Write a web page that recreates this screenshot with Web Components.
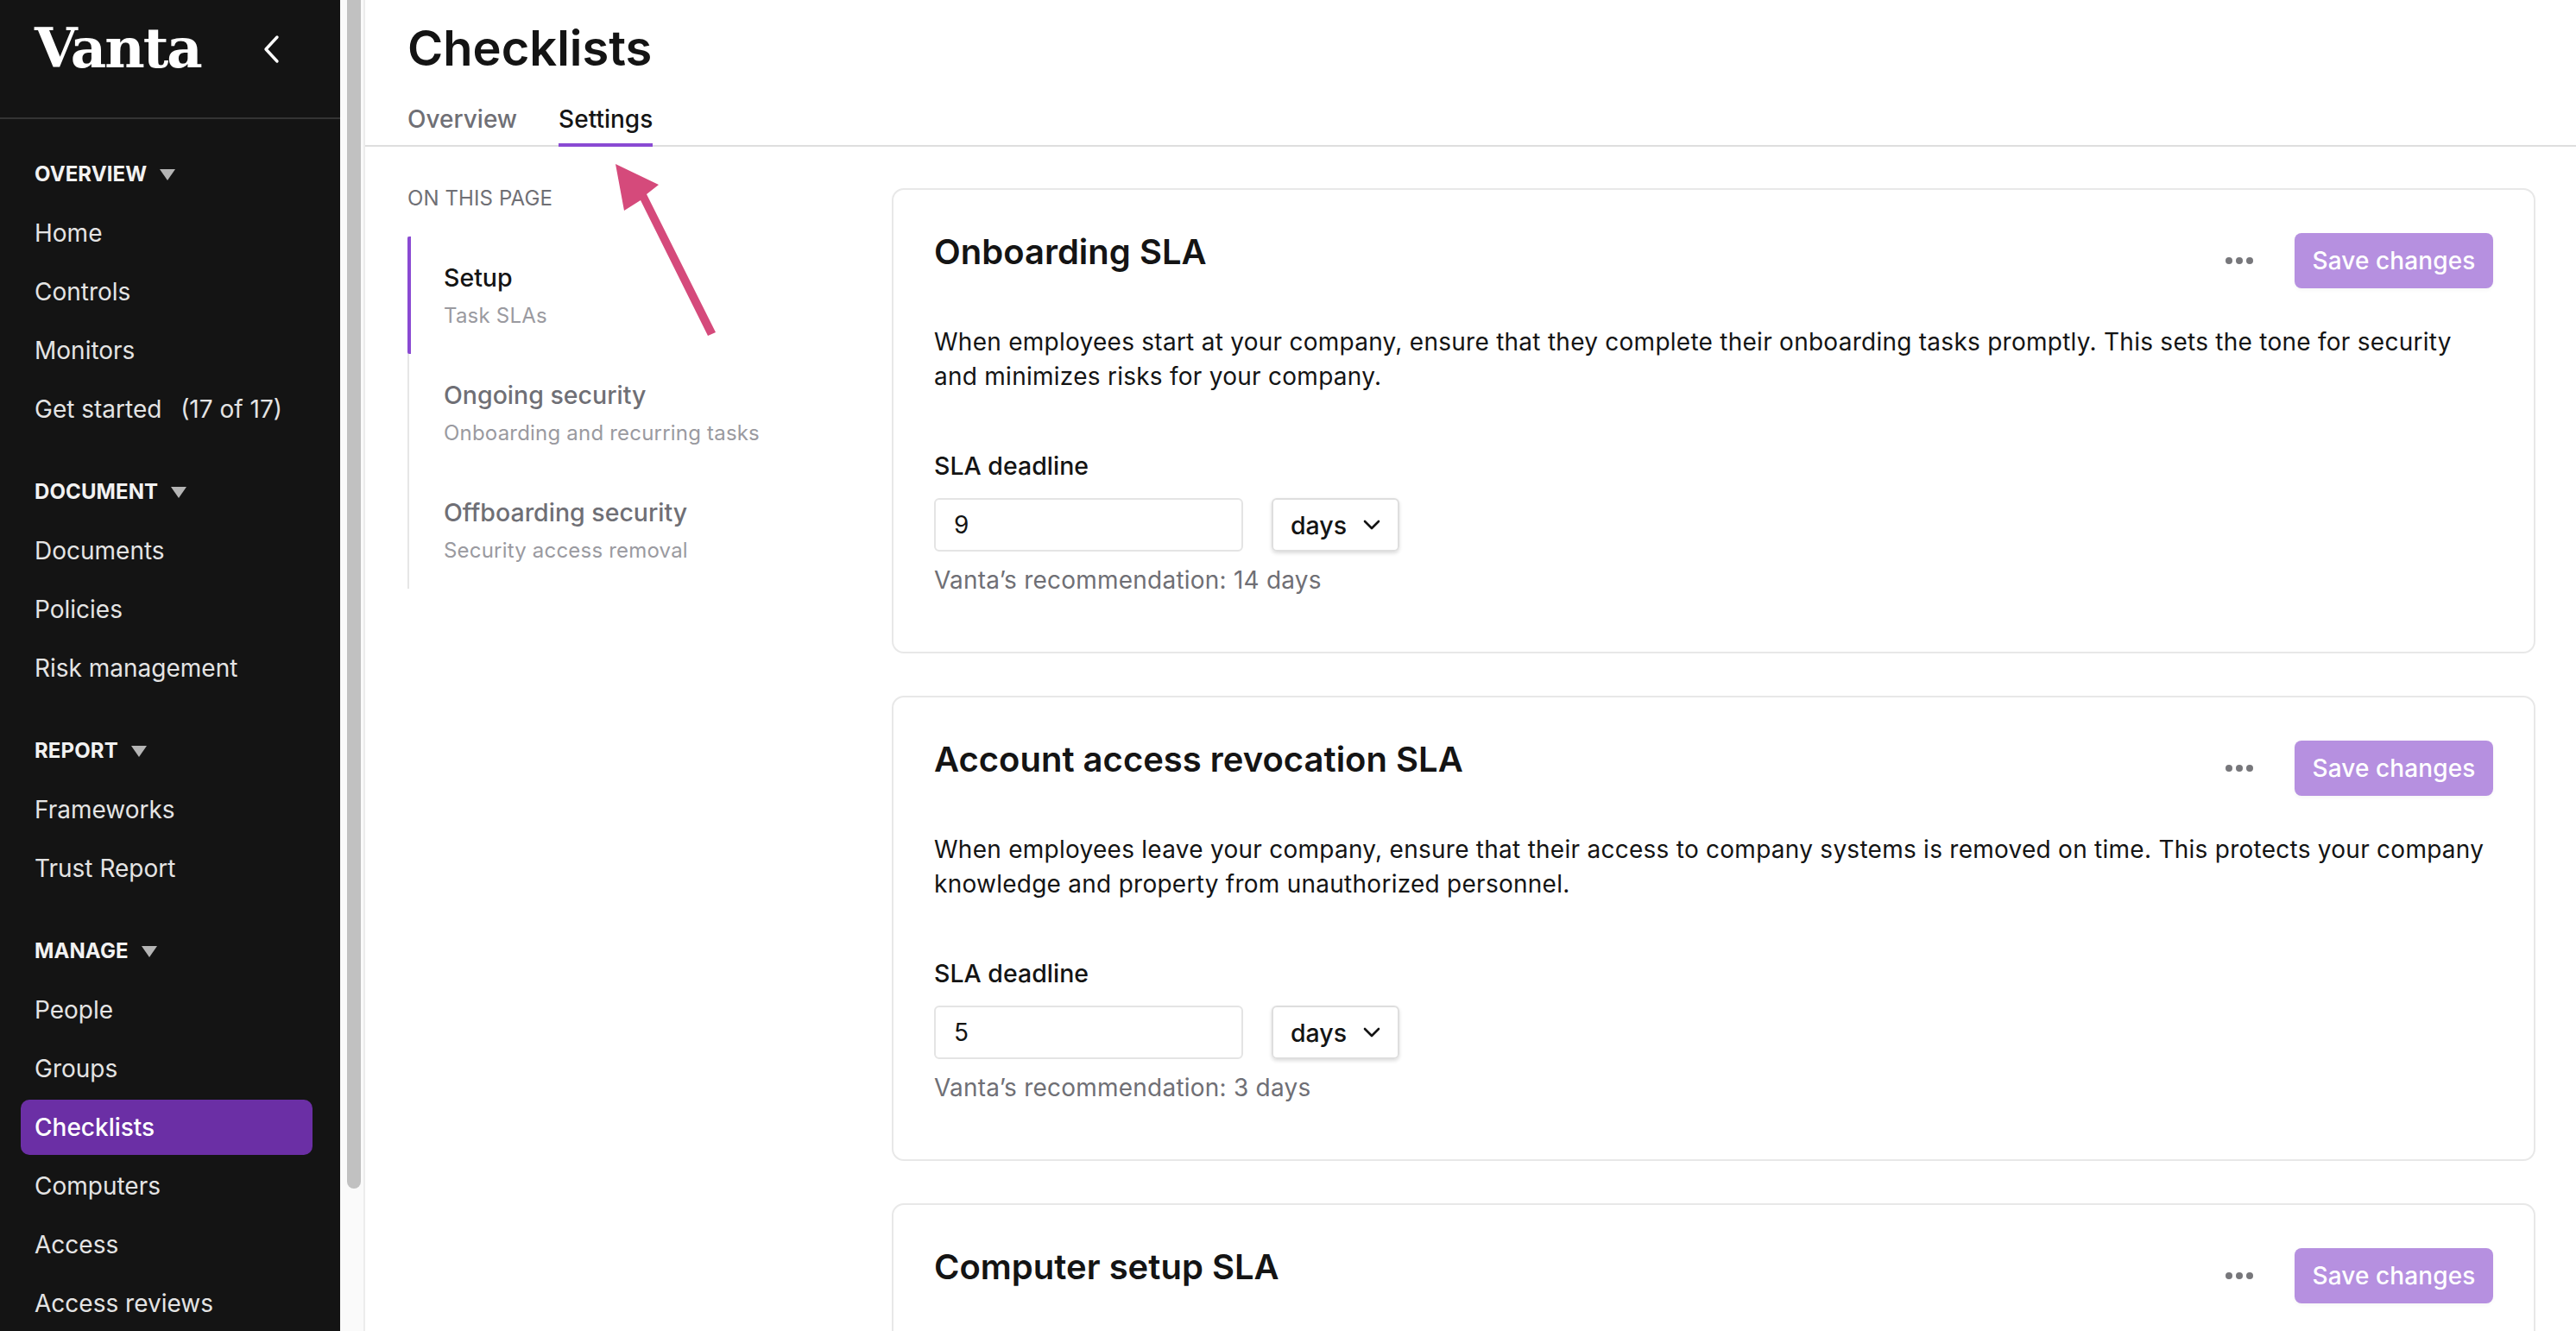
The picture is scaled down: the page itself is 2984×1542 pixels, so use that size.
<!DOCTYPE html>
<html lang="en"><head><meta charset="utf-8"><title>Checklists</title>
<style>
html,body{margin:0;height:100%;overflow:hidden;background:#fff;font-family:Inter,"Noto Sans",sans-serif;color:#141414}
v-app{height:100vh}
.wide{padding-left:6px}
</style></head><body>
<v-app>
  <v-sidebar slot="side">
    <v-nav-section label="OVERVIEW"><v-nav-item>Home</v-nav-item><v-nav-item>Controls</v-nav-item><v-nav-item>Monitors</v-nav-item><v-nav-item>Get started&nbsp; <span class="wide">(17 of 17)</span></v-nav-item></v-nav-section>
    <v-nav-section label="DOCUMENT"><v-nav-item>Documents</v-nav-item><v-nav-item>Policies</v-nav-item><v-nav-item>Risk management</v-nav-item></v-nav-section>
    <v-nav-section label="REPORT"><v-nav-item>Frameworks</v-nav-item><v-nav-item>Trust Report</v-nav-item></v-nav-section>
    <v-nav-section label="MANAGE"><v-nav-item>People</v-nav-item><v-nav-item>Groups</v-nav-item><v-nav-item active>Checklists</v-nav-item><v-nav-item>Computers</v-nav-item><v-nav-item>Access</v-nav-item><v-nav-item>Access reviews</v-nav-item></v-nav-section>
  </v-sidebar>
  <v-rail slot="rail"></v-rail>
  <v-main slot="main">
    <v-toc slot="toc">
      <v-toc-item active label="Setup">Task SLAs</v-toc-item>
      <v-toc-item label="Ongoing security">Onboarding and recurring tasks</v-toc-item>
      <v-toc-item label="Offboarding security">Security access removal</v-toc-item>
    </v-toc>
    <sla-card heading="Onboarding SLA" value="9" rec="Vanta’s recommendation: 14 days">When employees start at your company, ensure that they complete their onboarding tasks promptly. This sets the tone for security and minimizes risks for your company.</sla-card>
    <sla-card heading="Account access revocation SLA" value="5" rec="Vanta’s recommendation: 3 days">When employees leave your company, ensure that their access to company systems is removed on time. This protects your company knowledge and property from unauthorized personnel.</sla-card>
    <sla-card heading="Computer setup SLA"></sla-card>
  </v-main>
</v-app>
<script>
function def(name,html){
  customElements.define(name,class extends HTMLElement{
    connectedCallback(){
      if(this.shadowRoot)return;
      const r=this.attachShadow({mode:'open'});
      const a=n=>this.getAttribute(n)||'';
      r.innerHTML=typeof html==='function'?html(a,this):html;
    }
  });
}
def('v-app',`<style>:host{display:flex;width:100%;overflow:hidden}</style><slot name="side"></slot><slot name="rail"></slot><slot name="main"></slot>`);
def('v-sidebar',`<style>
:host{display:block;flex:none;width:394px;height:100%;background:#141414;color:#e4e4e4;overflow:hidden}
.top{height:136px;border-bottom:2px solid #343434;display:flex;align-items:flex-start;padding-left:40px}
.logo{font:700 64px/1 "DejaVu Serif",serif;color:#fff;letter-spacing:-2px;margin-top:24px;width:265px}
svg{margin-top:40px}
nav{padding:29px 24px 0}
</style><div class="top"><div class="logo">Vanta</div><svg width="20" height="34" viewBox="0 0 20 34" fill="none" stroke="#fff" stroke-width="3.4" stroke-linecap="round" stroke-linejoin="round"><path d="M16 3 3 17l13 14"/></svg></div><nav><slot></slot></nav>`);
def('v-nav-section',a=>`<style>
:host{display:block;margin-bottom:29px}
.h{height:68px;margin-bottom:3px;display:flex;align-items:center;padding-left:16px;font-weight:700;font-size:24px;color:#f2f2f2;gap:15px;letter-spacing:.1px}
svg{display:block;margin-top:1px}
</style><div class="h"><span>${a('label')}</span><svg width="18" height="14" viewBox="0 0 18 14"><path d="M0 1h18L9 14z" fill="#b5b5b5"/></svg></div><slot></slot>`);
def('v-nav-item',(a,el)=>`<style>
:host{display:flex;align-items:center;height:64px;margin-bottom:4px;padding-left:16px;border-radius:10px;font-size:28px;white-space:pre;width:322px;${el.hasAttribute('active')?'background:#6b2fa5;color:#fff;font-weight:500;':''}}
</style><slot></slot>`);
def('v-rail',`<style>
:host{display:block;flex:none;width:29px;height:100%;box-sizing:border-box;background:#fafafa;border-right:2px solid #ececec;padding-left:8px}
div{width:16px;height:1377px;background:#c1c1c1;border-radius:0 0 8px 8px}
</style><div></div>`);
def('v-main',`<style>
:host{display:block;flex:1;min-width:0;position:relative;height:100%;overflow:hidden}
header{padding:0 0 0 49px;border-bottom:2px solid #dedede;height:168px}
h1{margin:0;font-size:56px;line-height:56px;padding-top:28px;font-weight:600;color:#141414}
.tabs{display:flex;gap:48px;margin-top:34px;font-size:28px;line-height:40px;font-weight:500;color:#6f6f75}
.tabs span{height:52px;box-sizing:border-box}
.tabs .on{color:#141414;border-bottom:4px solid #8a4ad3}
.body{display:flex;padding:48px 47px 0 49px}
.toc{flex:none;width:561px}
.cards{flex:1;min-width:0;display:flex;flex-direction:column;gap:49px}
.arrow{position:absolute;left:0;top:0;pointer-events:none}
</style><header><h1>Checklists</h1><div class="tabs"><span>Overview</span><span class="on">Settings</span></div></header>
<div class="body"><div class="toc"><slot name="toc"></slot></div><div class="cards"><slot></slot></div></div>
<svg class="arrow" width="500" height="400" viewBox="423 0 500 400"><path d="M713 190 763 214 749 225 829 385 820 389 742 232 723 244Z" fill="#d54a7b"/></svg>`);
def('v-toc',`<style>
:host{display:block}
.t{font-size:24px;line-height:30px;color:#6f6f75;margin-top:-3px;letter-spacing:.1px}
.l{margin-top:29px;border-left:2px solid #e6e6e6;height:408px;box-sizing:border-box}
</style><div class="t">ON THIS PAGE</div><div class="l"><slot></slot></div>`);
def('v-toc-item',(a,el)=>{const on=el.hasAttribute('active');return `<style>
:host{display:block;height:136px;box-sizing:border-box;margin-left:-2px;padding:28px 0 0 38px;border-left:4px solid ${on?'#8a4ad3':'transparent'};border-radius:2px}
.a{font-size:28.5px;line-height:40px;font-weight:500;color:${on?'#141414':'#6f6f75'}}
.b{font-size:24px;line-height:34px;letter-spacing:.2px;color:#9a9aa0;margin-top:7px}
</style><div class="a">${a('label')}</div><div class="b"><slot></slot></div>`});
def('sla-card',(a,el)=>{const rec=a('rec');return `<style>
:host{display:block;height:539px;box-sizing:border-box;border:2px solid #e8e8e8;border-radius:14px;padding:50px 47px 0 47px;background:#fff}
.top{display:flex;align-items:flex-start;height:64px}
h2{margin:-2px 0 0;flex:1;font-size:40px;line-height:48px;font-weight:600;color:#141414}
.dots{display:flex;gap:4px;margin:28px 48px 0 0}
.dots i{width:8px;height:8px;border-radius:50%;background:#77777b}
.save{width:230px;height:64px;border-radius:8px;background:#b690e0;color:#fff;font-size:28px;letter-spacing:.1px;font-weight:500;display:flex;align-items:center;justify-content:center;box-shadow:0 2px 4px rgba(0,0,0,.04)}
p{margin:42px 0 0;font-size:28px;letter-spacing:.26px;line-height:40px;color:#141414}
label{display:block;margin-top:64px;font-size:28.5px;line-height:40px;font-weight:500}
.row{display:flex;gap:33px;margin-top:17px}
.inp{width:358px;height:62px;box-sizing:border-box;border:2px solid #e4e4e4;border-radius:6px;padding-left:21px;font-size:28px;display:flex;align-items:center}
.sel{width:148px;height:62px;box-sizing:border-box;border:2px solid #dedede;border-radius:6px;padding-left:20px;gap:19px;font-size:28.5px;font-weight:500;display:flex;align-items:center;box-shadow:0 2px 4px rgba(0,0,0,.14)}
.rec{margin-top:13px;font-size:28px;letter-spacing:.22px;line-height:40px;color:#6f6f75}
</style><div class="top"><h2>${a('heading')}</h2><div class="dots"><i></i><i></i><i></i></div><div class="save">Save changes</div></div>
${rec?`<p><slot></slot></p><label>SLA deadline</label><div class="row"><div class="inp">${a('value')}</div><div class="sel"><span>days</span><svg width="20" height="12" viewBox="0 0 20 12" fill="none" stroke="#141414" stroke-width="2.6" stroke-linecap="round" stroke-linejoin="round"><path d="M2 2l8 8 8-8"/></svg></div></div><div class="rec">${rec}</div>`:''}`});
</script>
</body></html>
